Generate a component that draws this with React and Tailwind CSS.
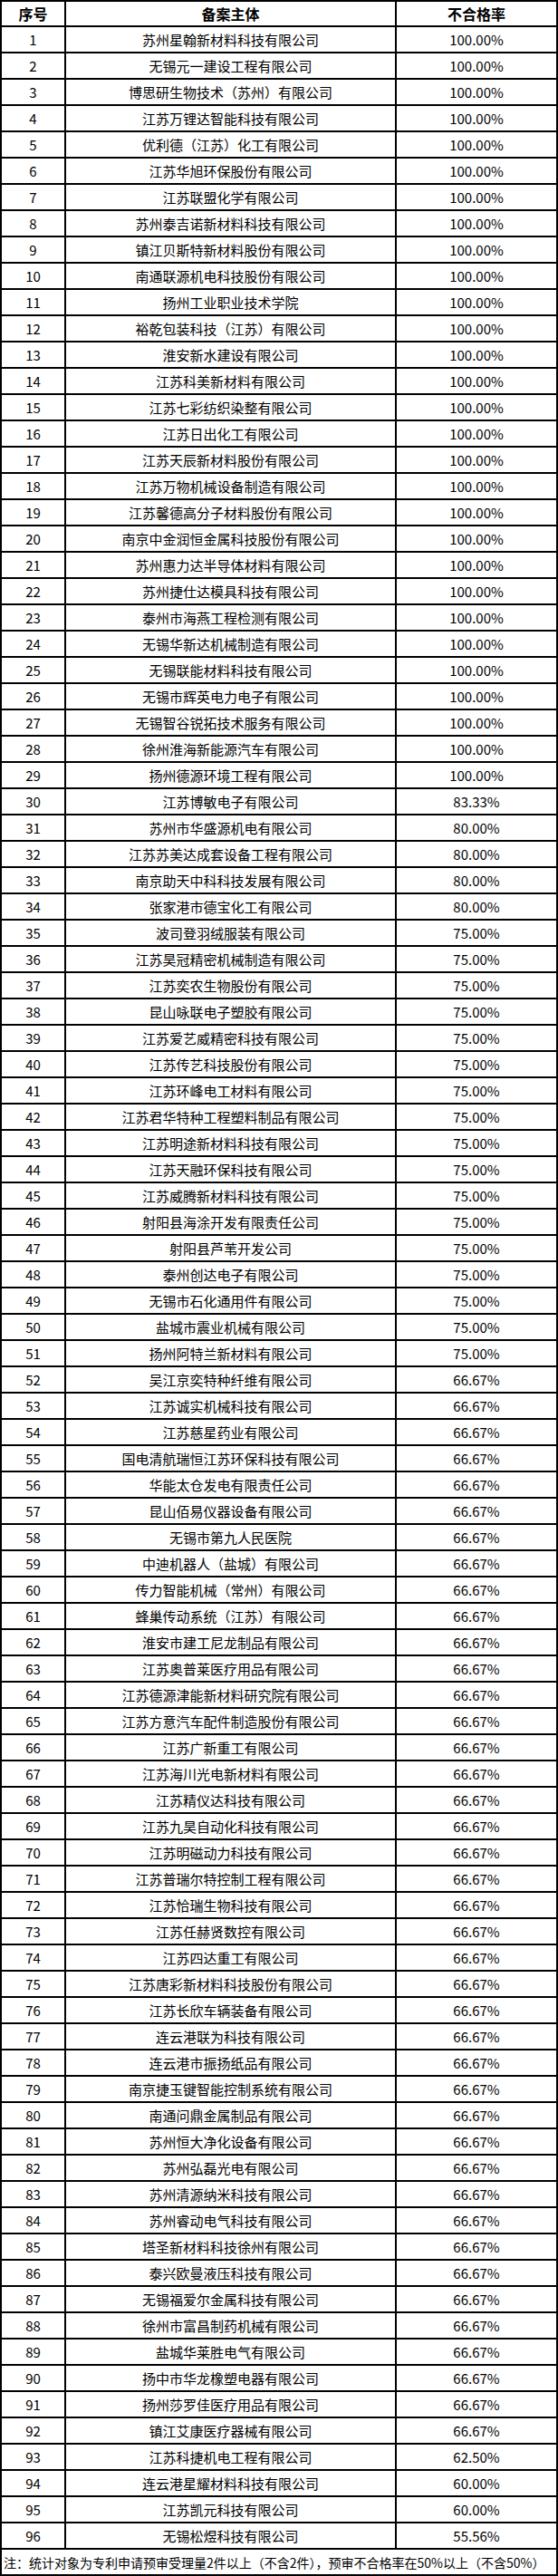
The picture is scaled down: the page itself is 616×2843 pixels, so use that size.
const names = [
  "苏州星翰新材料科技有限公司",
  "无锡元一建设工程有限公司",
  "博思研生物技术（苏州）有限公司",
  "江苏万锂达智能科技有限公司",
  "优利德（江苏）化工有限公司",
  "江苏华旭环保股份有限公司",
  "江苏联盟化学有限公司",
  "苏州泰吉诺新材料科技有限公司",
  "镇江贝斯特新材料股份有限公司",
  "南通联源机电科技股份有限公司",
  "扬州工业职业技术学院",
  "裕乾包装科技（江苏）有限公司",
  "淮安新水建设有限公司",
  "江苏科美新材料有限公司",
  "江苏七彩纺织染整有限公司",
  "江苏日出化工有限公司",
  "江苏天辰新材料股份有限公司",
  "江苏万物机械设备制造有限公司",
  "江苏馨德高分子材料股份有限公司",
  "南京中金润恒金属科技股份有限公司",
  "苏州惠力达半导体材料有限公司",
  "苏州捷仕达模具科技有限公司",
  "泰州市海燕工程检测有限公司",
  "无锡华新达机械制造有限公司",
  "无锡联能材料科技有限公司",
  "无锡市辉英电力电子有限公司",
  "无锡智谷锐拓技术服务有限公司",
  "徐州淮海新能源汽车有限公司",
  "扬州德源环境工程有限公司",
  "江苏博敏电子有限公司",
  "苏州市华盛源机电有限公司",
  "江苏苏美达成套设备工程有限公司",
  "南京助天中科科技发展有限公司",
  "张家港市德宝化工有限公司",
  "波司登羽绒服装有限公司",
  "江苏昊冠精密机械制造有限公司",
  "江苏奕农生物股份有限公司",
  "昆山咏联电子塑胶有限公司",
  "江苏爱艺威精密科技有限公司",
  "江苏传艺科技股份有限公司",
  "江苏环峰电工材料有限公司",
  "江苏君华特种工程塑料制品有限公司",
  "江苏明途新材料科技有限公司",
  "江苏天融环保科技有限公司",
  "江苏威腾新材料科技有限公司",
  "射阳县海涂开发有限责任公司",
  "射阳县芦苇开发公司",
  "泰州创达电子有限公司",
  "无锡市石化通用件有限公司",
  "盐城市震业机械有限公司",
  "扬州阿特兰新材料有限公司",
  "吴江京奕特种纤维有限公司",
  "江苏诚实机械科技有限公司",
  "江苏慈星药业有限公司",
  "国电清航瑞恒江苏环保科技有限公司",
  "华能太仓发电有限责任公司",
  "昆山佰易仪器设备有限公司",
  "无锡市第九人民医院",
  "中迪机器人（盐城）有限公司",
  "传力智能机械（常州）有限公司",
  "蜂巢传动系统（江苏）有限公司",
  "淮安市建工尼龙制品有限公司",
  "江苏奥普莱医疗用品有限公司",
  "江苏德源津能新材料研究院有限公司",
  "江苏方意汽车配件制造股份有限公司",
  "江苏广新重工有限公司",
  "江苏海川光电新材料有限公司",
  "江苏精仪达科技有限公司",
  "江苏九昊自动化科技有限公司",
  "江苏明磁动力科技有限公司",
  "江苏普瑞尔特控制工程有限公司",
  "江苏恰瑞生物科技有限公司",
  "江苏任赫贤数控有限公司",
  "江苏四达重工有限公司",
  "江苏唐彩新材料科技股份有限公司",
  "江苏长欣车辆装备有限公司",
  "连云港联为科技有限公司",
  "连云港市振扬纸品有限公司",
  "南京捷玉键智能控制系统有限公司",
  "南通问鼎金属制品有限公司",
  "苏州恒大净化设备有限公司",
  "苏州弘磊光电有限公司",
  "苏州清源纳米科技有限公司",
  "苏州睿动电气科技有限公司",
  "塔圣新材料科技徐州有限公司",
  "泰兴欧曼液压科技有限公司",
  "无锡福爱尔金属科技有限公司",
  "徐州市富昌制药机械有限公司",
  "盐城华莱胜电气有限公司",
  "扬中市华龙橡塑电器有限公司",
  "扬州莎罗佳医疗用品有限公司",
  "镇江艾康医疗器械有限公司",
  "江苏科捷机电工程有限公司",
  "连云港星耀材料科技有限公司",
  "江苏凯元科技有限公司",
  "无锡松煜科技有限公司",
];

function rateFor(n) {
  if (n <= 29) return "100.00%";
  if (n === 30) return "83.33%";
  if (n <= 34) return "80.00%";
  if (n <= 51) return "75.00%";
  if (n <= 92) return "66.67%";
  if (n === 93) return "62.50%";
  if (n <= 95) return "60.00%";
  return "55.56%";
}

export default function App() {
  return (
    <div
      className="w-[616px] bg-white text-black"
      style={{ fontFamily: '"Noto Sans CJK SC", "Noto Sans", sans-serif' }}
    >
      <div className="w-[616px] border-t-2 border-l-2 border-r-2 border-black">
        <div className="flex h-[28px] border-b-2 border-black text-[16px] font-bold leading-none">
          <div className="flex w-[71px] shrink-0 items-center justify-center border-r-2 border-black">序号</div>
          <div className="flex w-[365px] shrink-0 items-center justify-center border-r-2 border-black">备案主体</div>
          <div className="flex flex-1 items-center justify-center">不合格率</div>
        </div>
        {names.map((name, i) => (
          <div key={i} className="flex h-[29px] border-b-2 border-black text-[15px] font-normal leading-none">
            <div className="flex w-[71px] shrink-0 items-center justify-center border-r-2 border-black">{i + 1}</div>
            <div className="flex w-[365px] shrink-0 items-center justify-center border-r-2 border-black">{name}</div>
            <div className="flex flex-1 items-center justify-center">{rateFor(i + 1)}</div>
          </div>
        ))}
        <div className="flex h-[29px] items-center border-b-2 border-black pl-[2px] text-[14px] font-normal leading-none whitespace-nowrap">
          注：统计对象为专利申请预审受理量2件以上（不含2件），预审不合格率在50%以上（不含50%）
        </div>
      </div>
    </div>
  );
}
